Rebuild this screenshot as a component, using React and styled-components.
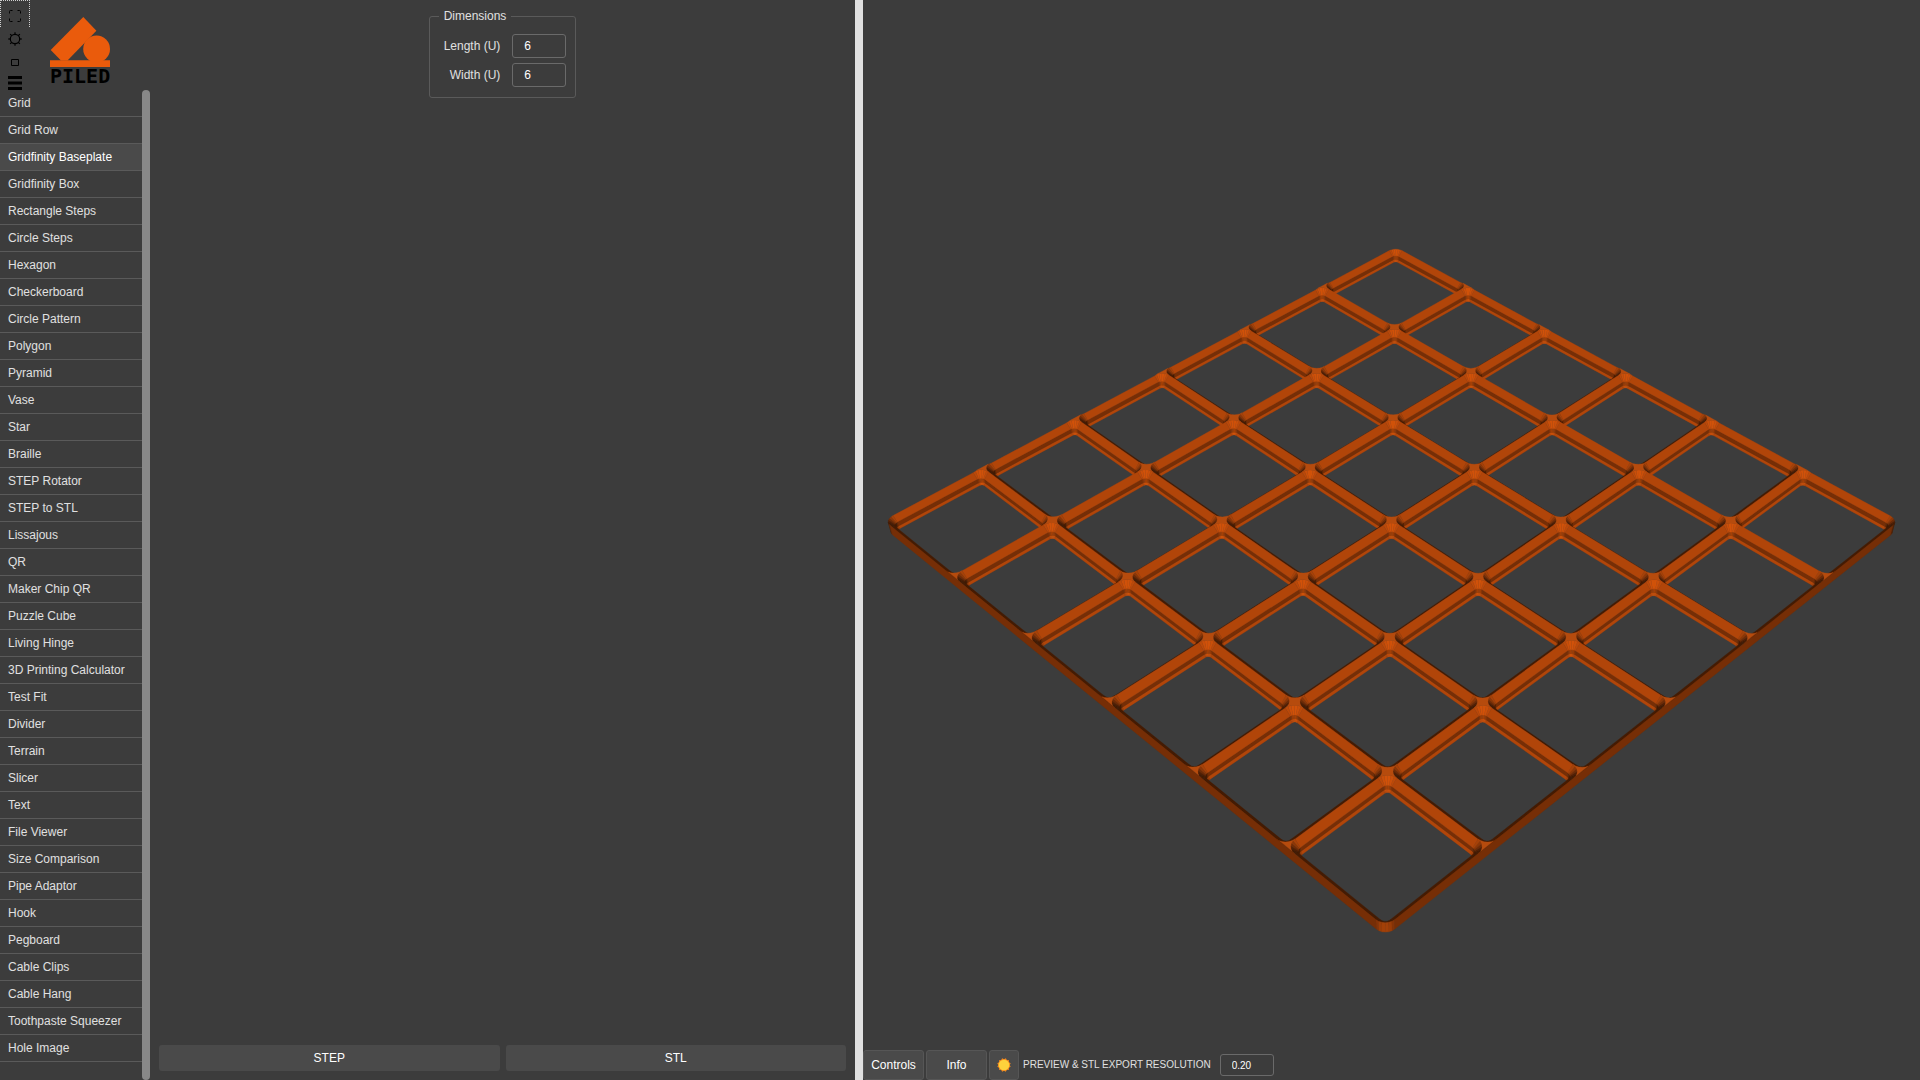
import React from "react";
import styled, { createGlobalStyle } from "styled-components";

const GlobalStyle = createGlobalStyle`
  *, *::before, *::after { box-sizing: border-box; }
  body {
    margin: 0;
    background: #3c3c3c;
    color: #e0e0e0;
    font: 12px/16px "Liberation Sans", Arial, sans-serif;
  }
  button, input { font: inherit; color: inherit; }
`;

const Page = styled.div`
  display: grid;
  grid-template-columns: minmax(0, 855fr) 8px minmax(0, 1057fr);
  height: 100vh;
  overflow: hidden;
`;

const LeftPane = styled.div`
  display: flex;
  min-height: 0;
`;

const Splitter = styled.div`
  background: #e0e0e0;
  cursor: col-resize;
`;

/* ---------- sidebar ---------- */

const Sidebar = styled.aside`
  display: flex;
  flex-direction: column;
  flex: none;
  width: 150px;
`;

const Header = styled.header`
  display: flex;
  gap: 20px;
  height: 90px;
`;

const Tools = styled.div`
  display: flex;
  flex-direction: column;
  width: 30px;
`;

const ToolButton = styled.button`
  display: flex;
  flex: ${(p) => (p.$last ? "1" : "none")};
  align-items: ${(p) => (p.$last ? "flex-end" : "center")};
  justify-content: center;
  height: ${(p) => (p.$focused ? 27 : 23)}px;
  min-height: 0;
  padding: ${(p) => (p.$focused ? "4px 0 0" : "0")};
  border: ${(p) => (p.$focused ? "1px dotted #d0d0d0" : "0")};
  border-bottom: 0;
  background: none;
  color: #000;

  svg { display: block; fill: none; stroke: currentColor; }
`;

const Logo = styled.a`
  display: flex;
  flex-direction: column;
  padding-top: 16px;
  color: #000;
  text-decoration: none;
  font: bold 20px/16px "DejaVu Sans Mono", monospace;

  svg { display: block; width: 60px; height: 52px; fill: #ea5b0c; }
`;

const ListArea = styled.div`
  display: flex;
  flex: 1;
  min-height: 0;
`;

const ItemList = styled.nav`
  flex: 1;
  min-height: 0;
  overflow: hidden;
`;

const Item = styled.a`
  display: block;
  height: 27px;
  padding-left: 8px;
  border-bottom: 1px solid #5a5a5a;
  background: ${(p) => (p.$active ? "#4a4a4a" : "transparent")};
  color: ${(p) => (p.$active ? "#fff" : "#e0e0e0")};
  line-height: 26px;
  text-decoration: none;
  white-space: nowrap;
`;

const Thumb = styled.div`
  width: 8px;
  border-radius: 4px;
  background: #888;
`;

/* ---------- settings column ---------- */

const Settings = styled.main`
  display: flex;
  flex-direction: column;
  flex: 1;
  align-items: center;
  justify-content: space-between;
  min-width: 0;
  padding: 8px 9px 9px;
`;

const Group = styled.fieldset`
  display: grid;
  gap: 5px;
  margin: 0;
  padding: 10px 9px 10px 14px;
  border: 1px solid #5a5a5a;
  border-radius: 3px;

  legend { margin-left: -5px; padding: 0 5px; }
`;

const Field = styled.label`
  display: flex;
  align-items: center;
  justify-content: flex-end;
  gap: 12px;
`;

const TextBox = styled.input`
  width: 54px;
  height: ${(p) => (p.$small ? 22 : 24)}px;
  padding: 0 11px;
  border: 1px solid #6a6a6a;
  border-radius: 3px;
  outline: 0;
  background: transparent;
  color: #fff;
  font-size: ${(p) => (p.$small ? 10 : 12)}px;
`;

const Exports = styled.div`
  display: grid;
  grid-template-columns: 1fr 1fr;
  gap: 6px;
  width: 100%;
`;

const ExportButton = styled.button`
  height: 26px;
  border: 0;
  border-radius: 3px;
  background: #4a4a4a;
  color: #fff;
`;

/* ---------- viewer ---------- */

const Viewer = styled.section`
  display: flex;
  flex-direction: column;
  min-width: 0;
  min-height: 0;
`;

const Canvas = styled.svg`
  flex: 1;
  width: 100%;
  min-height: 0;
`;

const Bar = styled.div`
  display: flex;
  align-items: center;
  gap: 2px;
  height: 30px;
`;

const BarButton = styled.button`
  display: flex;
  align-items: center;
  justify-content: center;
  width: ${(p) => (p.$icon ? 30 : 61)}px;
  height: 30px;
  padding: 0;
  border: 1px solid #565656;
  border-radius: 3px;
  background: #4a4a4a;
  color: #fff;
`;

const Resolution = styled.label`
  display: flex;
  align-items: center;
  gap: 9px;
  padding-left: 2px;
  font-size: 10px;
  white-space: nowrap;
`;

/* ---------- baseplate model ---------- */

const UNIT = 42;
const TOP = 4.65;
const CORNER = 4;
const SEGMENTS = 6;
// The outer walls sit slightly inside the grid for clearance.
const CLEARANCE = 0.25;
// Socket profile from the bottom up: inset from the cell edge and height.
const PROFILE = [
  [2.85, 0],
  [2.15, 0.7],
  [2.15, 2.5],
  [0, TOP],
];

const EYE = [460.596, 473.04, 405.168];
const TARGET = [190.562, 202.702, 0];
const FOCAL = 1775.853;
const CENTER = [1415.814, 736.527];

const sub = (a, b) => [a[0] - b[0], a[1] - b[1], a[2] - b[2]];
const dot = (a, b) => a[0] * b[0] + a[1] * b[1] + a[2] * b[2];
const cross = (a, b) => [
  a[1] * b[2] - a[2] * b[1],
  a[2] * b[0] - a[0] * b[2],
  a[0] * b[1] - a[1] * b[0],
];
const unit = (a) => {
  const l = Math.hypot(...a) || 1;
  return a.map((v) => v / l);
};
const mix = (a, b, t) => a.map((v, n) => v + (b[n] - v) * t);

const FORWARD = unit(sub(TARGET, EYE));
const RIGHT = unit([FORWARD[1], -FORWARD[0], 0]);
const UP = cross(RIGHT, FORWARD);

function project(p) {
  const d = sub(p, EYE);
  const depth = dot(d, FORWARD);
  return [
    CENTER[0] + (FOCAL * dot(d, RIGHT)) / depth,
    CENTER[1] - (FOCAL * dot(d, UP)) / depth,
  ];
}

const LIGHT = [113, 113, 130];

function shade(normal) {
  const r = Math.max(68, Math.min(212, 5 + dot(normal, LIGHT)));
  return `rgb(${Math.round(r)},${Math.round(r * 0.39)},${Math.round(r * 0.05)})`;
}

function roundedLoop(x0, y0, x1, y1, r, z) {
  const corners = [
    [x1 - r, y1 - r, 0],
    [x0 + r, y1 - r, 1],
    [x0 + r, y0 + r, 2],
    [x1 - r, y0 + r, 3],
  ];
  return corners.flatMap(([cx, cy, q]) =>
    Array.from({ length: SEGMENTS + 1 }, (_, s) => {
      const a = ((q + s / SEGMENTS) * Math.PI) / 2;
      return [cx + r * Math.cos(a), cy + r * Math.sin(a), z];
    })
  );
}

function band(lower, upper, outward, out) {
  lower.forEach((a, n) => {
    const m = (n + 1) % lower.length;
    const quad = [a, lower[m], upper[m], upper[n]];
    let normal = unit(cross(sub(quad[1], a), sub(quad[3], a)));
    if (!outward) normal = normal.map((v) => -v);
    if (dot(normal, sub(EYE, a)) > 0) out.push([quad, shade(normal)]);
  });
}

// Keeps the part of a polygon where sign * (p[axis] - limit) >= 0.
function clip(points, axis, limit, sign) {
  return points.flatMap((a, n) => {
    const b = points[(n + 1) % points.length];
    const da = sign * (a[axis] - limit);
    const db = sign * (b[axis] - limit);
    const kept = da >= 0 ? [a] : [];
    if (da >= 0 !== db >= 0) kept.push(mix(a, b, da / (da - db)));
    return kept;
  });
}

function buildPlate(length, width) {
  const faces = [];
  const X = width * UNIT;
  const Y = length * UNIT;
  const C = CLEARANCE;
  const inCorner = (p) =>
    (p[0] < CORNER || p[0] > X - CORNER) && (p[1] < CORNER || p[1] > Y - CORNER);

  // Pulls a rim point down its chamfer until it meets the outer wall.
  const trim = (top, low) => {
    if (inCorner(top)) return mix(top, low, C / PROFILE[2][0]);
    const t = [
      [C - top[0], low[0] - top[0]],
      [top[0] - (X - C), top[0] - low[0]],
      [C - top[1], low[1] - top[1]],
      [top[1] - (Y - C), top[1] - low[1]],
    ].map(([need, span]) => (need > 0 && span > 0 ? need / span : 0));
    return mix(top, low, Math.min(1, Math.max(...t)));
  };

  const cells = [];
  for (let i = 0; i < length; i++)
    for (let j = 0; j < width; j++) cells.push([i, j]);
  cells.sort((a, b) => a[0] + a[1] - b[0] - b[1]);

  cells.forEach(([i, j]) => {
    const loops = PROFILE.map(([inset, z]) =>
      roundedLoop(
        j * UNIT + inset,
        i * UNIT + inset,
        (j + 1) * UNIT - inset,
        (i + 1) * UNIT - inset,
        CORNER - inset,
        z
      )
    );
    loops[3] = loops[3].map((p, n) => trim(p, loops[2][n]));
    for (let k = 0; k < 3; k++) band(loops[k], loops[k + 1], false, faces);
  });

  band(
    roundedLoop(C, C, X - C, Y - C, CORNER - C, 0),
    roundedLoop(C, C, X - C, Y - C, CORNER - C, TOP - C),
    true,
    faces
  );

  // Wall tips rising to the lands along the two near sides.
  const tip = (at, map) =>
    faces.push([
      [[at - 4, TOP - C], [at - 2, TOP], [at + 2, TOP], [at + 4, TOP - C]].map(map),
      shade([1, 0, 0]),
    ]);
  for (let i = 1; i < length; i++) tip(i * UNIT, ([s, z]) => [X - C, s, z]);
  for (let j = 1; j < width; j++) tip(j * UNIT, ([s, z]) => [s, Y - C, z]);

  // Flat lands left between the rounded socket corners.
  for (let i = 0; i <= length; i++)
    for (let j = 0; j <= width; j++) {
      let points = [];
      let count = 0;
      [[1, 1], [-1, 1], [-1, -1], [1, -1]].forEach(([sx, sy], q) => {
        const inside =
          (sx > 0 ? j < width : j > 0) && (sy > 0 ? i < length : i > 0);
        if (!inside) return;
        count++;
        for (let s = 0; s <= SEGMENTS; s++) {
          const t = ((q % 2 ? SEGMENTS - s : s) / SEGMENTS) * (Math.PI / 2);
          points.push([
            j * UNIT + sx * CORNER * (1 - Math.sin(t)),
            i * UNIT + sy * CORNER * (1 - Math.cos(t)),
            TOP,
          ]);
        }
      });
      if (count < 2) continue;
      points = clip(points, 0, C, 1);
      points = clip(points, 0, X - C, -1);
      points = clip(points, 1, C, 1);
      points = clip(points, 1, Y - C, -1);
      faces.push([points, "#b64b0d"]);
    }

  return faces.map(([points, color]) => ({
    color,
    points: points
      .map((p) => project(p).map((v) => v.toFixed(1)).join(","))
      .join(" "),
  }));
}

const PLATE = buildPlate(6, 6);

function Model() {
  return (
    <Canvas viewBox="863 0 1057 1050" role="img" aria-label="Gridfinity Baseplate">
      {PLATE.map((f, n) => (
        <polygon key={n} points={f.points} fill={f.color} stroke={f.color} strokeWidth="0.3" />
      ))}
    </Canvas>
  );
}

/* ---------- icons ---------- */

const Expand = () => (
  <svg width="14" height="14" viewBox="0 0 14 14" strokeWidth="1">
    <path d="M1.5 4.5v-2q0-1 1-1h2M9.5 1.5h2q1 0 1 1v2M12.5 9.5v2q0 1-1 1h-2M4.5 12.5h-2q-1 0-1-1v-2" />
  </svg>
);

const Gear = () => (
  <svg width="16" height="16" viewBox="-8 -8 16 16" strokeWidth="1.2">
    <circle r="4.7" />
    {[0, 45, 90, 135, 180, 225, 270, 315].map((a) => (
      <path key={a} d="M0-4.7V-6.8" transform={`rotate(${a})`} />
    ))}
  </svg>
);

const Square = () => (
  <svg width="8" height="9" viewBox="0 0 8 9" strokeWidth="1">
    <path d="M.5 2.5h7v6h-7z" />
  </svg>
);

const Menu = () => (
  <svg width="14" height="14" viewBox="0 0 14 14" strokeWidth="3">
    <path d="M0 1.5h14M0 7h14M0 12.5h14" />
  </svg>
);

const Sun = () => (
  <svg width="14" height="14" viewBox="-7 -7 14 14">
    {[0, 30, 60].map((a) => (
      <rect key={a} x="-4.9" y="-4.9" width="9.8" height="9.8" fill="#f58a1f" transform={`rotate(${a})`} />
    ))}
    <circle r="5.3" fill="#fdd23c" />
  </svg>
);

const ITEMS = [
  "Grid", "Grid Row", "Gridfinity Baseplate", "Gridfinity Box", "Rectangle Steps",
  "Circle Steps", "Hexagon", "Checkerboard", "Circle Pattern", "Polygon", "Pyramid",
  "Vase", "Star", "Braille", "STEP Rotator", "STEP to STL", "Lissajous", "QR",
  "Maker Chip QR", "Puzzle Cube", "Living Hinge", "3D Printing Calculator", "Test Fit",
  "Divider", "Terrain", "Slicer", "Text", "File Viewer", "Size Comparison",
  "Pipe Adaptor", "Hook", "Pegboard", "Cable Clips", "Cable Hang",
  "Toothpaste Squeezer", "Hole Image",
];

export default function App() {
  return (
    <>
      <GlobalStyle />
      <Page>
        <LeftPane>
          <Sidebar>
            <Header>
              <Tools>
                <ToolButton $focused aria-label="Full screen"><Expand /></ToolButton>
                <ToolButton aria-label="Settings"><Gear /></ToolButton>
                <ToolButton aria-label="Window"><Square /></ToolButton>
                <ToolButton $last aria-label="Menu"><Menu /></ToolButton>
              </Tools>
              <Logo href="#">
                <svg viewBox="50 16 60 52">
                  <path d="M83.3 17 96.4 30.7 67.5 60.5H61L50.7 50z" />
                  <circle cx="96.6" cy="49" r="13.4" />
                  <path d="M50 60.3h60V67H50z" />
                </svg>
                <span>PILED</span>
              </Logo>
            </Header>
            <ListArea>
              <ItemList>
                {ITEMS.map((name) => (
                  <Item key={name} href="#" $active={name === "Gridfinity Baseplate"}>
                    {name}
                  </Item>
                ))}
              </ItemList>
              <Thumb />
            </ListArea>
          </Sidebar>
          <Settings>
            <Group>
              <legend>Dimensions</legend>
              <Field>Length (U)<TextBox defaultValue="6" /></Field>
              <Field>Width (U)<TextBox defaultValue="6" /></Field>
            </Group>
            <Exports>
              <ExportButton>STEP</ExportButton>
              <ExportButton>STL</ExportButton>
            </Exports>
          </Settings>
        </LeftPane>
        <Splitter />
        <Viewer>
          <Model />
          <Bar>
            <BarButton>Controls</BarButton>
            <BarButton>Info</BarButton>
            <BarButton $icon aria-label="Toggle light"><Sun /></BarButton>
            <Resolution>
              PREVIEW &amp; STL EXPORT RESOLUTION
              <TextBox $small defaultValue="0.20" />
            </Resolution>
          </Bar>
        </Viewer>
      </Page>
    </>
  );
}
